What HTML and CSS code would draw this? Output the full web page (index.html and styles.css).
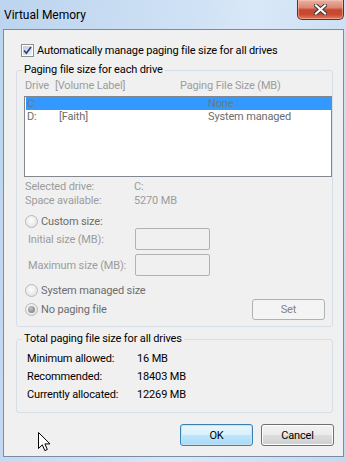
FILE: index.html
```html
<!DOCTYPE html>
<html lang="en">
<head>
    <meta charset="UTF-8">
    <title>Virtual Memory</title>
    <link rel="stylesheet" href="styles.css">
</head>
<body>
    <div class="window">
        <div class="titlebar">
            <span class="title">Virtual Memory</span>
            <button class="close-btn" title="Close">
                <svg width="13" height="11" viewBox="0 0 13 11">
                    <path d="M2 1.5 L11 9.5 M11 1.5 L2 9.5" stroke="#3a3230" stroke-width="4" stroke-linecap="square" fill="none"/>
                    <path d="M2 1.5 L11 9.5 M11 1.5 L2 9.5" stroke="#fff" stroke-width="2.2" stroke-linecap="square" fill="none"/>
                </svg>
            </button>
        </div>

        <div class="client">
            <label class="auto-row">
                <span class="checkbox">
                    <svg width="9" height="9" viewBox="0 0 9 9">
                        <path d="M1 4.5 L3.4 7.2 L8 1" stroke="#22438a" stroke-width="1.7" fill="none"/>
                    </svg>
                </span>
                Automatically manage paging file size for all drives
            </label>

            <fieldset class="group group-drives">
                <legend>Paging file size for each drive</legend>

                <div class="list-head">
                    <span class="hd-drive">Drive</span>
                    <span class="hd-label">[Volume Label]</span>
                    <span class="hd-size">Paging File Size (MB)</span>
                </div>

                <div class="listbox">
                    <div class="list-row selected">
                        <span class="c-drive">C:</span>
                        <span class="c-label"></span>
                        <span class="c-size">None</span>
                    </div>
                    <div class="list-row">
                        <span class="c-drive">D:</span>
                        <span class="c-label">[Faith]</span>
                        <span class="c-size">System managed</span>
                    </div>
                </div>

                <div class="info">
                    <div class="info-row"><span class="info-label">Selected drive:</span><span>C:</span></div>
                    <div class="info-row"><span class="info-label">Space available:</span><span>5270 MB</span></div>
                </div>

                <div class="radio-row custom-row"><span class="radio"></span>Custom size:</div>
                <div class="size-row">
                    <span class="size-label">Initial size (MB):</span>
                    <input class="textbox" type="text" disabled>
                </div>
                <div class="size-row max-row">
                    <span class="size-label">Maximum size (MB):</span>
                    <input class="textbox" type="text" disabled>
                </div>
                <div class="radio-row system-row"><span class="radio"></span>System managed size</div>
                <div class="nopaging-row">
                    <div class="radio-row"><span class="radio on"></span>No paging file</div>
                    <button class="btn btn-set" disabled>Set</button>
                </div>
            </fieldset>

            <fieldset class="group group-total">
                <legend>Total paging file size for all drives</legend>
                <div class="total-row first"><span class="total-label">Minimum allowed:</span><span>16 MB</span></div>
                <div class="total-row"><span class="total-label">Recommended:</span><span>18403 MB</span></div>
                <div class="total-row"><span class="total-label">Currently allocated:</span><span>12269 MB</span></div>
            </fieldset>

            <div class="dialog-buttons">
                <button class="btn btn-ok">OK</button>
                <button class="btn btn-cancel">Cancel</button>
            </div>
        </div>

        <svg class="cursor" width="13" height="20" viewBox="0 0 13 20">
            <path d="M0.5 0.5 L0.5 16.5 L4.3 12.8 L6.8 18.6 L9.3 17.5 L6.9 11.9 L12 11.9 Z" fill="#fff" stroke="#000" stroke-width="1" stroke-linejoin="miter"/>
        </svg>
    </div>
</body>
</html>
```

FILE: styles.css
```css
body {
    margin: 0;
    padding: 0;
    font-family: Roboto, "Liberation Sans", Arial, sans-serif;
    font-size: 11px;
    letter-spacing: -0.15px;
    color: #000;
}

.window {
    position: relative;
    width: 346px;
    height: 462px;
    display: flex;
    flex-direction: column;
    overflow: hidden;
    background: linear-gradient(100deg, #bcd4ee 0%, #cfe1f5 45%, #d9e8f8 60%, #c3d9f1 100%);
}

.titlebar {
    height: 29px;
    display: flex;
    align-items: flex-start;
    flex-shrink: 0;
}

.title {
    padding: 8px 0 0 4px;
    line-height: 14px;
    font-size: 12px;
    letter-spacing: 0;
    color: #000;
}

.close-btn {
    margin-left: auto;
    margin-right: 2px;
    width: 47px;
    height: 20px;
    padding: 0;
    border: 1px solid #6b2b22;
    border-top: none;
    border-radius: 0 0 5px 5px;
    background: linear-gradient(#eab1a4 0%, #dc8673 40%, #c8472f 52%, #c9482f 75%, #dc7d5f 100%);
    box-shadow: inset 0 0 0 1px rgba(255, 210, 190, 0.45);
    display: flex;
    align-items: center;
    justify-content: center;
}

.client {
    flex: 1;
    margin: 0 2px 5px 3px;
    border: 1px solid #7b8ca2;
    background-color: #f0f0f0;
    display: flex;
    flex-direction: column;
}

/* checkbox row */

.auto-row {
    display: flex;
    align-items: center;
    height: 13px;
    margin-top: 14px;
    padding-left: 17px;
    gap: 3px;
}

.checkbox {
    width: 13px;
    height: 13px;
    box-sizing: border-box;
    border: 1px solid #8e8f8f;
    background: #fff;
    padding: 1px;
    display: flex;
}

.checkbox svg {
    width: 9px;
    height: 9px;
    border: 0;
    background: linear-gradient(135deg, #c9ced6, #eef0f3);
}

/* group boxes */

.group {
    margin: 6px 10px 0 12px;
    padding: 0;
    min-width: 0;
    border: 1px solid #d5dfe5;
    border-radius: 3px;
}

.group legend {
    margin-left: 5px;
    padding: 0 2px;
    line-height: 14px;
}

.group-drives {
    padding-bottom: 6px;
    color: #9c9c9c;
}

.group-drives legend {
    color: #000;
}

.list-head {
    display: flex;
    margin-top: 2px;
    padding-left: 8px;
    line-height: 14px;
}

.hd-drive {
    width: 30px;
}

.hd-label {
    width: 125px;
}

.listbox {
    margin: 3px 0 0 7px;
    height: 81px;
    box-sizing: border-box;
    border: 1px solid #828790;
    background-color: #fff;
    padding-left: 1px;
    color: #6d6d6d;
}

.list-row {
    display: flex;
    height: 13px;
    line-height: 13px;
    padding-left: 1px;
}

.list-row.selected {
    background-color: #3399ff;
    color: #6f7780;
}

.c-drive {
    width: 32px;
}

.c-label {
    width: 149px;
}

.info {
    margin-top: 3px;
}

.info-row {
    display: flex;
    line-height: 14px;
    padding-left: 8px;
}

.info-label {
    width: 109px;
}

.radio-row {
    display: flex;
    align-items: center;
    gap: 3px;
    height: 13px;
    padding-left: 8px;
    color: #6d6d6d;
}

.custom-row {
    margin-top: 7px;
}

.system-row {
    margin-top: 8px;
}

.radio {
    position: relative;
    width: 13px;
    height: 13px;
    box-sizing: border-box;
    border: 1px solid #b9b9b9;
    border-radius: 50%;
    background: radial-gradient(circle at 45% 40%, #fdfdfd 0%, #eeeeee 50%, #d8d8d8 100%);
}

.radio.on::after {
    content: "";
    position: absolute;
    left: 2px;
    top: 2px;
    width: 7px;
    height: 7px;
    border-radius: 50%;
    background: radial-gradient(circle at 40% 35%, #c4c4c4 0%, #8c8c8c 70%, #7a7a7a 100%);
}

.size-row {
    display: flex;
    align-items: center;
    height: 22px;
    padding-left: 11px;
}

.max-row {
    margin-top: 4px;
}

.size-label {
    width: 107px;
}

.textbox {
    width: 75px;
    height: 22px;
    box-sizing: border-box;
    margin: 0;
    border: 1px solid #b2b2b2;
    border-radius: 2px;
    background-color: #f0f0f0;
}

.nopaging-row {
    display: flex;
    align-items: center;
    justify-content: space-between;
    height: 21px;
    margin-top: 2px;
    padding-right: 7px;
}

/* buttons */

.btn {
    height: 21px;
    box-sizing: border-box;
    padding: 0;
    font-family: inherit;
    font-size: 11px;
    letter-spacing: inherit;
    border-radius: 3px;
    color: #000;
}

.btn-set {
    width: 73px;
    border: 1px solid #adb2b5;
    background-color: #f4f4f4;
    color: #838383;
}

.group-total {
    margin-top: 5px;
    padding-bottom: 8px;
}

.total-row {
    display: flex;
    line-height: 18px;
    padding-left: 10px;
}

.total-row.first {
    margin-top: 4px;
}

.total-label {
    width: 110px;
}

.dialog-buttons {
    display: flex;
    justify-content: flex-end;
    gap: 8px;
    margin: 11px 9px 0 0;
}

.btn-ok,
.btn-cancel {
    width: 73px;
    height: 22px;
}

.btn-ok {
    border: 1px solid #3c7fb1;
    background: linear-gradient(#eaf6fd 0%, #d9f0fc 50%, #bee6fd 50%, #a7d9f5 100%);
    box-shadow: inset 0 0 0 1px #c4e5f6;
}

.btn-cancel {
    border: 1px solid #707070;
    background: linear-gradient(#f2f2f2 0%, #ebebeb 50%, #dddddd 50%, #cfcfcf 100%);
    box-shadow: inset 0 0 0 1px #fcfcfc;
}

.cursor {
    position: absolute;
    left: 38px;
    top: 432px;
}
```
